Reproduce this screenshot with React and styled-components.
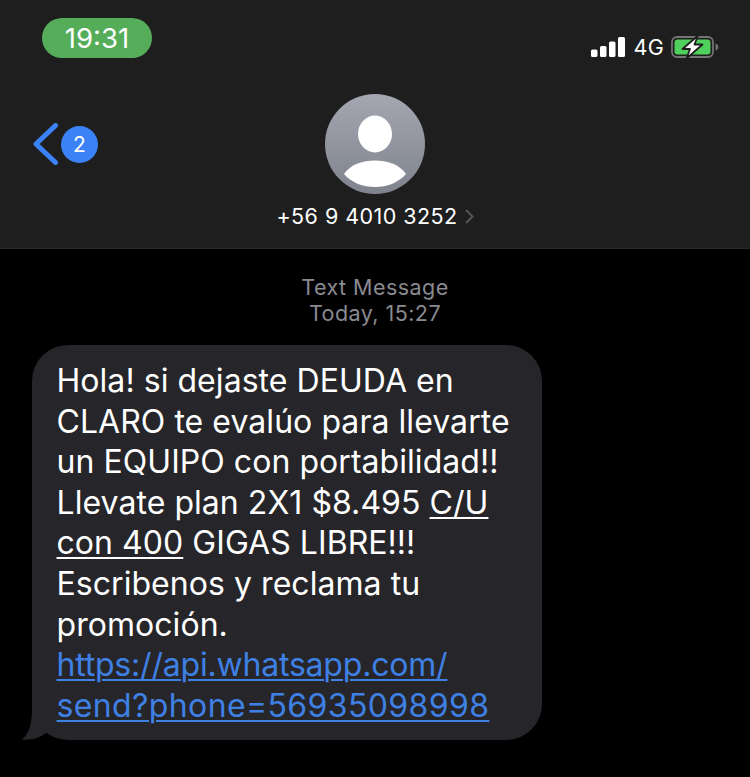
import styled, { createGlobalStyle } from "styled-components"

const GlobalStyle = createGlobalStyle`
  html, body {
    margin: 0;
    padding: 0;
    background: #000;
  }
  body {
    font-family: Inter, "Liberation Sans", sans-serif;
  }
`

const Screen = styled.div`
  width: 750px;
  height: 777px;
  overflow: hidden;
  background: #000;
  display: flex;
  flex-direction: column;
`

const Header = styled.header`
  height: 249px;
  box-sizing: border-box;
  background: #1e1e1e;
  border-bottom: 1px solid #2a2a2a;
  position: relative;
  display: flex;
  flex-direction: column;
`

const StatusBar = styled.div`
  height: 76px;
  box-sizing: border-box;
  padding: 18px 31px 0 42px;
  display: flex;
  justify-content: space-between;
  align-items: flex-start;
`

const TimePill = styled.div`
  width: 110px;
  height: 40px;
  border-radius: 20px;
  background: #55ad59;
  color: #fff;
  font-size: 27.5px;
  display: flex;
  align-items: center;
  justify-content: center;
`

const StatusIcons = styled.div`
  display: flex;
  align-items: center;
  gap: 7px;
  margin-top: 16px;
  color: #fff;
  font-size: 21.5px;
  letter-spacing: 0.3px;
`

const BackButton = styled.div`
  position: absolute;
  left: 33px;
  top: 123px;
  display: flex;
  align-items: center;
  gap: 3px;
`

const Badge = styled.span`
  width: 37px;
  height: 37px;
  border-radius: 50%;
  background: #3b82f6;
  color: #fff;
  font-size: 21px;
  display: flex;
  align-items: center;
  justify-content: center;
`

const Contact = styled.div`
  display: flex;
  flex-direction: column;
  align-items: center;
  margin-top: 18px;
  gap: 9px;
`

const Avatar = styled.svg`
  display: block;
  width: 100px;
  height: 100px;
`

const ContactName = styled.div`
  display: flex;
  align-items: center;
  gap: 7px;
  color: #fff;
  font-size: 21.5px;
  letter-spacing: 0.45px;
  line-height: 26px;
`

const Thread = styled.main`
  flex: 1;
  padding: 25px 0 0 32px;
`

const Meta = styled.div`
  color: #8a8a90;
  font-size: 21.5px;
  letter-spacing: 0.45px;
  line-height: 26px;
  text-align: center;
  margin-left: -32px;
  margin-bottom: 19px;
`

const Bubble = styled.div`
  width: 510px;
  height: 395px;
  box-sizing: border-box;
  background: #26262a;
  border-radius: 36px;
  color: #fff;
  padding: 16px 20px 0 24.5px;
  font-size: 32px;
  letter-spacing: 0.05px;
  line-height: 40.6px;
  position: relative;
  white-space: nowrap;
`

const Tail = styled.svg`
  position: absolute;
  left: -10px;
  bottom: 0;
  width: 40px;
  height: 34px;
`

const Underlined = styled.span`
  text-decoration: underline;
  text-decoration-thickness: 2px;
  text-underline-offset: 3px;
`

const Link = styled(Underlined)`
  color: #3f80e4;
  letter-spacing: ${(props) => props.$tracking}px;
`

function SignalIcon() {
  return (
    <svg width="35" height="20" viewBox="0 0 35 20">
      <rect x="0" y="12.500" width="6.500" height="7.500" rx="1.600" fill="#fff" />
      <rect x="9" y="9" width="6.500" height="11" rx="1.600" fill="#fff" />
      <rect x="18" y="4.500" width="6.500" height="15.500" rx="1.600" fill="#fff" />
      <rect x="27" y="0" width="7" height="20" rx="1.600" fill="#fff" />
    </svg>
  )
}

function BatteryIcon() {
  return (
    <svg width="48" height="24" viewBox="0 0 48 24">
      <rect x="1" y="2" width="41" height="20" rx="5" fill="none" stroke="#737373" strokeWidth="1.800" />
      <rect x="3.500" y="4.500" width="36" height="15" rx="3" fill="#4fd15b" />
      <path d="M44.500 8.500c1.800.5 2.800 1.800 2.800 3.500s-1 3-2.800 3.500z" fill="#737373" />
      <path d="M27 0.500 L11.500 14 L19 14 L15.500 23.500 L31.500 9.500 L23.500 9.500 Z" fill="#fff" stroke="#1e1e1e" strokeWidth="1.800" strokeLinejoin="round" />
    </svg>
  )
}

function BackChevron() {
  return (
    <svg width="25" height="42" viewBox="0 0 25 42">
      <path d="M22.500 2.500 L3 21 L22.500 39.500" fill="none" stroke="#3b82f6" strokeWidth="5" strokeLinecap="round" strokeLinejoin="round" />
    </svg>
  )
}

function DisclosureChevron() {
  return (
    <svg width="9" height="15" viewBox="0 0 9 15">
      <path d="M1 1 L7.500 7.500 L1 14" fill="none" stroke="#55555a" strokeWidth="2" />
    </svg>
  )
}

function PersonAvatar() {
  return (
    <Avatar viewBox="0 0 100 100">
      <defs>
        <linearGradient id="avatarFill" x1="0" y1="0" x2="0" y2="1">
          <stop offset="0" stopColor="#a4a7b1" />
          <stop offset="1" stopColor="#7f838d" />
        </linearGradient>
      </defs>
      <circle cx="50" cy="50" r="50" fill="url(#avatarFill)" />
      <ellipse cx="50" cy="40" rx="17" ry="18.500" fill="#fff" />
      <path d="M19 80 C26 70 38 66.500 50 66.500 C62 66.500 74 70 81 80 C73 89 62 93 50 93 C38 93 27 89 19 80 Z" fill="#fff" />
    </Avatar>
  )
}

export default function App() {
  return (
    <Screen>
      <GlobalStyle />
      <Header>
        <StatusBar>
          <TimePill>19:31</TimePill>
          <StatusIcons>
            <SignalIcon />
            <span>4G</span>
            <BatteryIcon />
          </StatusIcons>
        </StatusBar>
        <BackButton>
          <BackChevron />
          <Badge>2</Badge>
        </BackButton>
        <Contact>
          <PersonAvatar />
          <ContactName>
            +56 9 4010 3252
            <DisclosureChevron />
          </ContactName>
        </Contact>
      </Header>
      <Thread>
        <Meta>
          Text Message
          <br />
          Today, 15:27
        </Meta>
        <Bubble>
          Hola! si dejaste DEUDA en
          <br />
          CLARO te evalúo para llevarte
          <br />
          un EQUIPO con portabilidad!!
          <br />
          Llevate plan 2X1 $8.495 <Underlined>C/U</Underlined>
          <br />
          <Underlined>con 400</Underlined> GIGAS LIBRE!!!
          <br />
          Escribenos y reclama tu
          <br />
          promoción.
          <br />
          <Link $tracking={-0.2}>https://api.whatsapp.com/</Link>
          <br />
          <Link $tracking={0.38}>send?phone=56935098998</Link>
          <Tail viewBox="0 0 40 34">
            <path d="M10 0 C10 14 9 26 0 33.500 C9 34.500 18 32 24 27 L40 0 Z" fill="#26262a" />
          </Tail>
        </Bubble>
      </Thread>
    </Screen>
  )
}
